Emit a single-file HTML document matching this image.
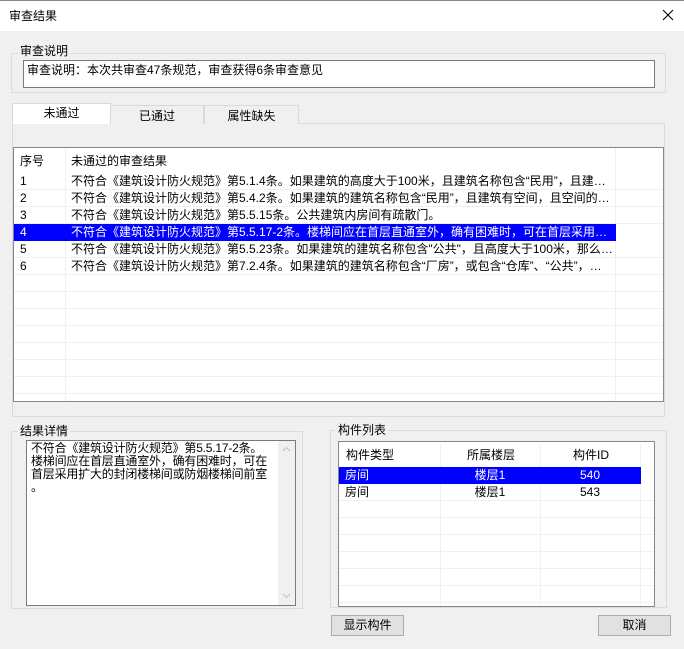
<!DOCTYPE html>
<html><head><meta charset="utf-8"><style>
*{box-sizing:border-box;margin:0;padding:0}
body{width:684px;height:649px;background:#f0f0f0;font-family:"Liberation Sans","Noto Sans CJK SC","Microsoft YaHei",sans-serif;font-size:12px;color:#000;position:relative;overflow:hidden}
.a{position:absolute}
.grp{position:absolute;border:1px solid #dcdcdc}
.lbl{position:absolute;background:#f0f0f0;padding:0 2px;line-height:14px}
.row{position:absolute;left:0;height:17px;line-height:17px;white-space:nowrap;border-bottom:1px solid #f0f0f0}
.btn{position:absolute;border:1px solid #adadad;background:#e1e1e1;text-align:center;line-height:18px}
</style></head><body>
<div class="a" style="left:0;top:0;width:684px;height:31px;background:#fff;border-top:1px solid #888"></div>
<div class="a" style="left:9px;top:8px;line-height:16px">审查结果</div>
<svg class="a" style="left:662px;top:9px" width="12" height="12"><path d="M1 1L11 11M11 1L1 11" stroke="#000" stroke-width="1.1"/></svg>

<div class="grp" style="left:11px;top:53px;width:655px;height:40px"></div>
<div class="lbl" style="left:18px;top:44px">审查说明</div>
<div class="a" style="left:23px;top:60px;width:632px;height:28px;background:#fff;border:1px solid #7a7a7a;padding:2px 3px;line-height:14px">审查说明：本次共审查47条规范，审查获得6条审查意见</div>

<div class="a" style="left:12px;top:123px;width:653px;height:294px;border:1px solid #d9d9d9;background:#f0f0f0"></div>
<div class="a" style="left:110px;top:105px;width:94px;height:19px;border:1px solid #d9d9d9;border-bottom:none;background:#f0f0f0;text-align:center;line-height:20px">已通过</div>
<div class="a" style="left:204px;top:105px;width:95px;height:19px;border:1px solid #d9d9d9;border-bottom:none;background:#f0f0f0;text-align:center;line-height:20px">属性缺失</div>
<div class="a" style="left:12px;top:103px;width:99px;height:21px;border:1px solid #d9d9d9;border-bottom:none;background:#fff;text-align:center;line-height:18px">未通过</div>

<div class="a" style="left:13px;top:147px;width:651px;height:255px;background:#fff;border:1px solid #828790;overflow:hidden">
 <div class="a" style="left:51px;top:0;width:1px;height:260px;background:#f0f0f0"></div>
 <div class="a" style="left:601px;top:0;width:1px;height:260px;background:#f0f0f0"></div>
 <div class="a" style="left:6px;top:5px;line-height:16px">序号</div>
 <div class="a" style="left:57px;top:5px;line-height:16px">未通过的审查结果</div>
 <div class="a" style="left:0;top:25px;width:650px">
  <div class="row" style="top:0;width:650px"><span class="a" style="left:6px">1</span><span class="a" style="left:57px">不符合《建筑设计防火规范》第5.1.4条。如果建筑的高度大于100米，且建筑名称包含“民用”，且建…</span></div>
  <div class="row" style="top:17px;width:650px"><span class="a" style="left:6px">2</span><span class="a" style="left:57px">不符合《建筑设计防火规范》第5.4.2条。如果建筑的建筑名称包含“民用”，且建筑有空间，且空间的…</span></div>
  <div class="row" style="top:34px;width:650px"><span class="a" style="left:6px">3</span><span class="a" style="left:57px">不符合《建筑设计防火规范》第5.5.15条。公共建筑内房间有疏散门。</span></div>
  <div class="row" style="top:51px;width:602px;background:#0000ff;color:#fff;border-bottom:none"><span class="a" style="left:6px">4</span><span class="a" style="left:57px">不符合《建筑设计防火规范》第5.5.17-2条。楼梯间应在首层直通室外，确有困难时，可在首层采用…</span></div>
  <div class="row" style="top:68px;width:650px"><span class="a" style="left:6px">5</span><span class="a" style="left:57px">不符合《建筑设计防火规范》第5.5.23条。如果建筑的建筑名称包含"公共"，且高度大于100米，那么…</span></div>
  <div class="row" style="top:85px;width:650px"><span class="a" style="left:6px">6</span><span class="a" style="left:57px">不符合《建筑设计防火规范》第7.2.4条。如果建筑的建筑名称包含“厂房”，或包含“仓库”、“公共”，…</span></div>
  <div class="row" style="top:102px;width:650px"></div>
  <div class="row" style="top:119px;width:650px"></div>
  <div class="row" style="top:136px;width:650px"></div>
  <div class="row" style="top:153px;width:650px"></div>
  <div class="row" style="top:170px;width:650px"></div>
  <div class="row" style="top:187px;width:650px"></div>
  <div class="row" style="top:204px;width:650px"></div>
 </div>
</div>

<div class="grp" style="left:11px;top:431px;width:292px;height:178px"></div>
<div class="lbl" style="left:18px;top:424px">结果详情</div>
<div class="a" style="left:26px;top:440px;width:270px;height:166px;background:#fff;border:1px solid #7a7a7a">
 <div class="a" style="left:4px;top:1px;width:238px;line-height:13px;font-size:12px;letter-spacing:-0.2px">不符合《建筑设计防火规范》第5.5.17-2条。<br>楼梯间应在首层直通室外，确有困难时，可在<br>首层采用扩大的封闭楼梯间或防烟楼梯间前室<br>。</div>
 <div class="a" style="left:251px;top:0;width:17px;height:164px;background:#f0f0f0"></div>
 <svg class="a" style="left:255px;top:5px" width="9" height="6"><path d="M1 5L4.5 1.5L8 5" stroke="#c0c0c0" fill="none"/></svg>
 <svg class="a" style="left:255px;top:152px" width="9" height="6"><path d="M1 1L4.5 4.5L8 1" stroke="#c0c0c0" fill="none"/></svg>
</div>

<div class="grp" style="left:330px;top:430px;width:337px;height:178px"></div>
<div class="lbl" style="left:336px;top:423px">构件列表</div>
<div class="a" style="left:338px;top:441px;width:317px;height:166px;background:#fff;border:1px solid #828790;overflow:hidden">
 <div class="a" style="left:101px;top:2px;width:1px;height:170px;background:#f0f0f0"></div>
 <div class="a" style="left:201px;top:2px;width:1px;height:170px;background:#f0f0f0"></div>
 <div class="a" style="left:301px;top:2px;width:1px;height:170px;background:#f0f0f0"></div>
 <div class="a" style="left:7px;top:5px;line-height:16px">构件类型</div>
 <div class="a" style="left:102px;top:5px;width:100px;text-align:center;line-height:16px">所属楼层</div>
 <div class="a" style="left:202px;top:5px;width:100px;text-align:center;line-height:16px">构件ID</div>
 <div class="row" style="top:25px;width:302px;height:17px;background:#0000ff;color:#fff;border:none"><span class="a" style="left:6px">房间</span><span class="a" style="left:101px;width:100px;text-align:center">楼层1</span><span class="a" style="left:201px;width:100px;text-align:center">540</span></div>
 <div class="row" style="top:42px;width:316px"><span class="a" style="left:6px">房间</span><span class="a" style="left:101px;width:100px;text-align:center">楼层1</span><span class="a" style="left:201px;width:100px;text-align:center">543</span></div>
 <div class="row" style="top:59px;width:316px"></div>
 <div class="row" style="top:76px;width:316px"></div>
 <div class="row" style="top:93px;width:316px"></div>
 <div class="row" style="top:110px;width:316px"></div>
 <div class="row" style="top:127px;width:316px"></div>
 <div class="row" style="top:144px;width:316px"></div>
</div>

<div class="btn" style="left:331px;top:615px;width:73px;height:21px">显示构件</div>
<div class="btn" style="left:598px;top:615px;width:73px;height:21px">取消</div>
</body></html>
